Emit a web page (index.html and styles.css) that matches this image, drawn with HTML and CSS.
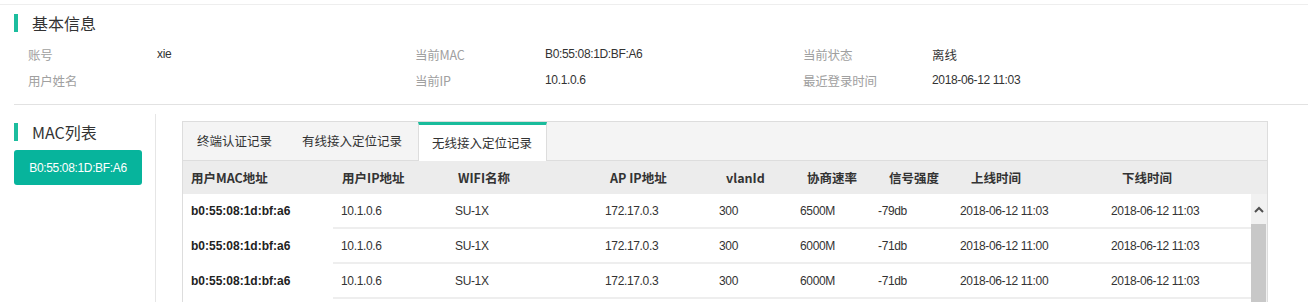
FILE: index.html
```html
<!DOCTYPE html>
<html lang="zh-CN">
<head>
<meta charset="utf-8">
<title>用户详情</title>
<link rel="stylesheet" href="styles.css">
</head>
<body>
<div class="page">
  <section class="basic">
    <div class="basic-body">
      <h2 class="sec-title">基本信息</h2>
      <div class="info-grid">
        <span class="lbl">账号</span><span class="val">xie</span>
        <span class="lbl">当前MAC</span><span class="val">B0:55:08:1D:BF:A6</span>
        <span class="lbl">当前状态</span><span class="val cjk">离线</span>
        <span class="lbl">用户姓名</span><span class="val"></span>
        <span class="lbl">当前IP</span><span class="val">10.1.0.6</span>
        <span class="lbl">最近登录时间</span><span class="val">2018-06-12 11:03</span>
      </div>
    </div>
  </section>

  <section class="mac-section">
    <aside class="side">
      <h2 class="sec-title">MAC列表</h2>
      <button class="mac-btn">B0:55:08:1D:BF:A6</button>
    </aside>
    <div class="main">
      <div class="tabbox">
        <div class="tabs">
          <div class="tab">终端认证记录</div>
          <div class="tab">有线接入定位记录</div>
          <div class="tab active">无线接入定位记录</div>
        </div>
        <div class="thead">
          <div class="th">用户MAC地址</div>
          <div class="th">用户IP地址</div>
          <div class="th">WIFI名称</div>
          <div class="th">AP IP地址</div>
          <div class="th">vlanId</div>
          <div class="th">协商速率</div>
          <div class="th">信号强度</div>
          <div class="th">上线时间</div>
          <div class="th">下线时间</div>
        </div>
        <div class="tbody-wrap">
          <div class="tbody">
            <div class="row">
              <div class="td mac">b0:55:08:1d:bf:a6</div>
              <div class="td">10.1.0.6</div>
              <div class="td">SU-1X</div>
              <div class="td">172.17.0.3</div>
              <div class="td">300</div>
              <div class="td">6500M</div>
              <div class="td">-79db</div>
              <div class="td">2018-06-12 11:03</div>
              <div class="td">2018-06-12 11:03</div>
            </div>
            <div class="row">
              <div class="td mac">b0:55:08:1d:bf:a6</div>
              <div class="td">10.1.0.6</div>
              <div class="td">SU-1X</div>
              <div class="td">172.17.0.3</div>
              <div class="td">300</div>
              <div class="td">6000M</div>
              <div class="td">-71db</div>
              <div class="td">2018-06-12 11:00</div>
              <div class="td">2018-06-12 11:03</div>
            </div>
            <div class="row">
              <div class="td mac">b0:55:08:1d:bf:a6</div>
              <div class="td">10.1.0.6</div>
              <div class="td">SU-1X</div>
              <div class="td">172.17.0.3</div>
              <div class="td">300</div>
              <div class="td">6000M</div>
              <div class="td">-71db</div>
              <div class="td">2018-06-12 11:00</div>
              <div class="td">2018-06-12 11:03</div>
            </div>
          </div>
          <div class="vscroll">
            <div class="vscroll-up">
              <svg width="10" height="7" viewBox="0 0 10 7"><path d="M1 6 L5 2 L9 6" fill="none" stroke="#505050" stroke-width="2"/></svg>
            </div>
            <div class="vscroll-thumb"></div>
          </div>
        </div>
      </div>
    </div>
  </section>
</div>
</body>
</html>
```

FILE: styles.css
```css
html, body {
  margin: 0;
  padding: 0;
  overflow: hidden;
  background: #fff;
}

body {
  font-family: "Liberation Sans", "Noto Sans CJK SC", sans-serif;
  font-size: 12px;
  color: #333;
}

.page {
  padding-top: 4px;
}

.basic {
  border-top: 1px solid #eeeeee;
}

.basic-body {
  margin-left: 14px;
  padding-top: 9px;
  padding-bottom: 11px;
  border-bottom: 1px solid #e2e2e2;
}

.sec-title {
  margin: 0;
  font-family: "Noto Sans CJK SC", sans-serif;
  font-weight: normal;
  font-size: 16px;
  line-height: 18px;
  height: 18px;
  color: #333;
  border-left: 4px solid #1cbd9e;
  padding-left: 14px;
}

.info-grid {
  display: grid;
  grid-template-columns: 129px 258px 130px 258px 129px 1fr;
  grid-auto-rows: 26px;
  align-items: center;
  margin-top: 9px;
  padding-left: 14px;
}

.lbl {
  font-family: "Noto Sans CJK SC", "Liberation Sans", sans-serif;
  font-size: 12.5px;
  color: #a0a0a0;
  letter-spacing: -0.2px;
}

.val {
  color: #333;
  letter-spacing: -0.35px;
}

.val.cjk {
  font-family: "Noto Sans CJK SC", sans-serif;
  font-size: 12.5px;
  letter-spacing: 0;
}

.mac-section {
  display: flex;
  padding-top: 9px;
  height: 188px;
}

.side {
  width: 156px;
  flex: none;
  box-sizing: border-box;
  border-right: 1px solid #e6e6e6;
  padding-left: 14px;
  padding-top: 9px;
}

.mac-btn {
  display: block;
  margin-top: 9px;
  width: 128px;
  height: 35px;
  border: none;
  border-radius: 3px;
  background: #07b49c;
  color: #fff;
  font-family: "Liberation Sans", sans-serif;
  font-size: 12px;
  letter-spacing: -0.35px;
  padding: 0;
}

.main {
  flex: 1;
  padding-left: 26px;
  padding-right: 40px;
  padding-top: 7px;
}

.tabbox {
  border: 1px solid #dddddd;
  border-bottom: none;
  height: 181px;
  box-sizing: border-box;
  overflow: hidden;
}

.tabs {
  display: flex;
  height: 38px;
  background: #f4f4f4;
  border-bottom: 1px solid #dddddd;
  font-family: "Noto Sans CJK SC", sans-serif;
  font-size: 12.5px;
  color: #333;
}

.tab {
  padding: 0 15px 0 14px;
  line-height: 38px;
}

.tab + .tab {
  padding-left: 15px;
}

.tab.active {
  padding: 0 14px 0 13px;
  margin-left: 1px;
  background: #fff;
  border-top: 3px solid #1abc9c;
  border-left: 1px solid #dddddd;
  border-right: 1px solid #dddddd;
  height: 36px;
  line-height: 36px;
  margin-bottom: -1px;
  box-sizing: content-box;
}

.thead {
  display: grid;
  grid-template-columns: 151px 116px 152px 116px 81px 82px 82px 151px 1fr;
  height: 33px;
  align-items: center;
  background: #ececec;
  font-family: "Noto Sans CJK SC", sans-serif;
  font-weight: bold;
  font-size: 12.5px;
  color: #333;
}

.th {
  padding-left: 8px;
  white-space: nowrap;
}

.tbody-wrap {
  display: flex;
}

.tbody {
  width: 1068px;
  flex: none;
}

.row {
  display: grid;
  grid-template-columns: 150px 114px 150px 114px 81px 78px 82px 151px 1fr;
  height: 35px;
}

.td {
  display: flex;
  align-items: center;
  padding-left: 8px;
  box-sizing: border-box;
  border-bottom: 2px solid #eeeeee;
  letter-spacing: -0.35px;
  color: #333;
  white-space: nowrap;
}

.td.mac {
  border-bottom-color: transparent;
  font-weight: bold;
  letter-spacing: 0;
  color: #222;
}

.vscroll {
  flex: 1;
  background: #f1f1f1;
  display: flex;
  flex-direction: column;
  height: 108px;
}

.vscroll-up {
  height: 30px;
  display: flex;
  align-items: center;
  justify-content: center;
}

.vscroll-thumb {
  flex: 1;
  background: #c8c8c8;
  margin-right: 1px;
}
```
